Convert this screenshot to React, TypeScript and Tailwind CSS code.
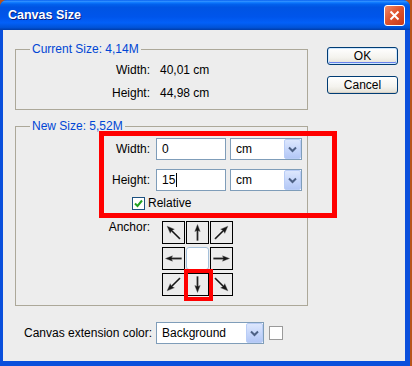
import React from 'react'

function Arrow({ angle }: { angle: number }) {
    const diagonal = angle % 90 !== 0
    const d = diagonal
        ? 'M10.5 1.5 L7.6 8.8 L9.8 8 L9.8 19.5 L11.2 19.5 L11.2 8 L13.4 8.8 Z'
        : 'M10.5 2.5 L7.8 9.5 L9.8 8.7 L9.8 18.5 L11.2 18.5 L11.2 8.7 L13.2 9.5 Z'
    return (
        <svg width="21" height="21" viewBox="0 0 21 21">
            <g transform={`rotate(${angle} 10.5 10.5)`}>
                <path d={d} fill="#151515" stroke="#555" strokeWidth="0.4" />
            </g>
        </svg>
    )
}

function DropButton() {
    return (
        <div className="flex h-[20px] w-[17px] items-center justify-center rounded-[2px] border border-[#b9cdf6] bg-[linear-gradient(180deg,#dde7fd_0%,#c3d4fa_60%,#b3c7f5_100%)]">
            <svg width="9" height="7" viewBox="0 0 9 7">
                <path d="M1 1.5 L4.5 5 L8 1.5" fill="none" stroke="#4d6185" strokeWidth="2" />
            </svg>
        </div>
    )
}

function Select({ value, width }: { value: string; width: string }) {
    return (
        <div className={`flex h-[22px] items-center justify-between border border-[#7f9db9] bg-white pl-[5px] pr-0 ${width}`}>
            <span>{value}</span>
            <DropButton />
        </div>
    )
}

function XpButton({ label, primary }: { label: string; primary?: boolean }) {
    return (
        <button
            className={`h-[18px] w-[71px] rounded-[3px] border border-[#003c74] bg-[linear-gradient(180deg,#ffffff_0%,#f4f3ee_60%,#e3e0d6_100%)] leading-[14px] text-black ${primary ? 'shadow-[inset_0_0_0_1px_#cee7ff,inset_0_-1px_0_1px_#6982ee]' : 'shadow-[inset_0_-1px_0_0_#d6d0c5]'}`}
        >
            {label}
        </button>
    )
}

const anchors = [315, 0, 45, 270, -1, 90, 225, 180, 135]

export default function App() {
    return (
        <div className="h-[366px] w-[412px] overflow-hidden bg-[#b8541a] font-['Liberation_Sans',Arial,sans-serif] text-[12px] text-black">
            <div className="flex h-[366px] w-[410px] flex-col rounded-t-[7px] bg-[#0a4fdc]">
                {/* title bar */}
                <div className="flex h-[30px] items-center justify-between rounded-t-[7px] bg-[linear-gradient(180deg,#0058ee_0%,#3593ff_4%,#127dff_8%,#0262ee_14%,#0054e3_24%,#0055eb_56%,#0260f8_76%,#0052d6_92%,#003ca8_100%)] pl-[8px] pr-[5px]">
                    <span className="text-[12.5px] font-bold text-white [text-shadow:1px_1px_0_#0a1e80]">Canvas Size</span>
                    <div className="flex h-[21px] w-[21px] items-center justify-center rounded-[3px] border border-white bg-[linear-gradient(135deg,#f08a6a_0%,#e0552e_45%,#c9391a_100%)]">
                        <svg width="11" height="11" viewBox="0 0 11 11">
                            <path d="M1.5 1.5 L9.5 9.5 M9.5 1.5 L1.5 9.5" stroke="white" strokeWidth="2" />
                        </svg>
                    </div>
                </div>

                {/* client */}
                <div className="flex flex-1 pb-[5px] pl-[3px] pr-[5px]">
                    <div className="relative flex flex-1 bg-[#ededed] pl-[12px] pt-[12px]">
                        <div className="flex w-[293px] flex-col">
                            <fieldset className="h-[68px] border border-[#aca899]">
                                <legend className="ml-[14px] px-[2px] leading-[14px] text-[#0046d5]">Current Size: 4,14M</legend>
                                <div className="flex flex-col gap-[7px] pt-[6px] leading-[16px]">
                                    <div className="flex">
                                        <span className="w-[134px] text-right">Width:</span>
                                        <span className="ml-[10px]">40,01 cm</span>
                                    </div>
                                    <div className="flex">
                                        <span className="w-[134px] text-right">Height:</span>
                                        <span className="ml-[10px]">44,98 cm</span>
                                    </div>
                                </div>
                            </fieldset>

                            <fieldset className="mt-[9px] h-[187px] border border-[#aca899]">
                                <legend className="ml-[14px] px-[2px] leading-[14px] text-[#0046d5]">New Size: 5,52M</legend>
                                <div className="flex flex-col pt-[5px]">
                                    <div className="flex items-center">
                                        <span className="w-[134px] text-right">Width:</span>
                                        <div className="ml-[6px] flex h-[22px] w-[70px] items-center border border-[#7f9db9] bg-white pl-[5px]">0</div>
                                        <div className="ml-[4px]">
                                            <Select value="cm" width="w-[72px]" />
                                        </div>
                                    </div>
                                    <div className="mt-[9px] flex items-center">
                                        <span className="w-[134px] text-right">Height:</span>
                                        <div className="ml-[6px] flex h-[22px] w-[70px] items-center border border-[#7f9db9] bg-white pl-[5px]">
                                            15<span className="ml-[1px] h-[14px] w-px bg-black" />
                                        </div>
                                        <div className="ml-[4px]">
                                            <Select value="cm" width="w-[72px]" />
                                        </div>
                                    </div>
                                    <div className="ml-[116px] mt-[6px] flex items-center gap-[3px] leading-[13px]">
                                        <div className="flex h-[13px] w-[13px] items-center justify-center border border-[#1c5180] bg-white">
                                            <svg width="9" height="9" viewBox="0 0 9 9">
                                                <path d="M1 4.5 L3.5 7 L8 1.5" fill="none" stroke="#21a121" strokeWidth="2" />
                                            </svg>
                                        </div>
                                        <span>Relative</span>
                                    </div>
                                    <div className="mt-[11px] flex items-start">
                                        <span className="w-[134px] text-right leading-[12px]">Anchor:</span>
                                        <div className="ml-[12px] grid grid-cols-[23px_23px_23px] gap-x-[1px] gap-y-[3px]">
                                            {anchors.map((a, i) =>
                                                a < 0 ? (
                                                    <div key={i} className="h-[23px] w-[23px] rounded-[3px] border border-[#a4bfd9] bg-white" />
                                                ) : (
                                                    <div key={i} className="flex h-[23px] w-[23px] items-center justify-center border border-black bg-[#ececec]">
                                                        <Arrow angle={a} />
                                                    </div>
                                                )
                                            )}
                                        </div>
                                    </div>
                                </div>
                            </fieldset>

                            <div className="mt-[16px] flex items-center pl-[9px]">
                                <span className="w-[132px]">Canvas extension color:</span>
                                <Select value="Background" width="w-[108px]" />
                                <div className="ml-[5px] h-[14px] w-[14px] border border-[#9a9a9a] bg-white" />
                            </div>
                        </div>

                        <div className="ml-[19px] mt-[5px] flex flex-col gap-[11px]">
                            <XpButton label="OK" primary />
                            <XpButton label="Cancel" />
                        </div>

                        {/* annotation boxes */}
                        <div className="absolute left-[96px] top-[101px] h-[87px] w-[238px] border-[5px] border-[#ff0000]" />
                        <div className="absolute left-[181px] top-[239px] h-[32px] w-[29px] border-[4px] border-[#ff0000]" />
                    </div>
                </div>
            </div>
        </div>
    )
}
